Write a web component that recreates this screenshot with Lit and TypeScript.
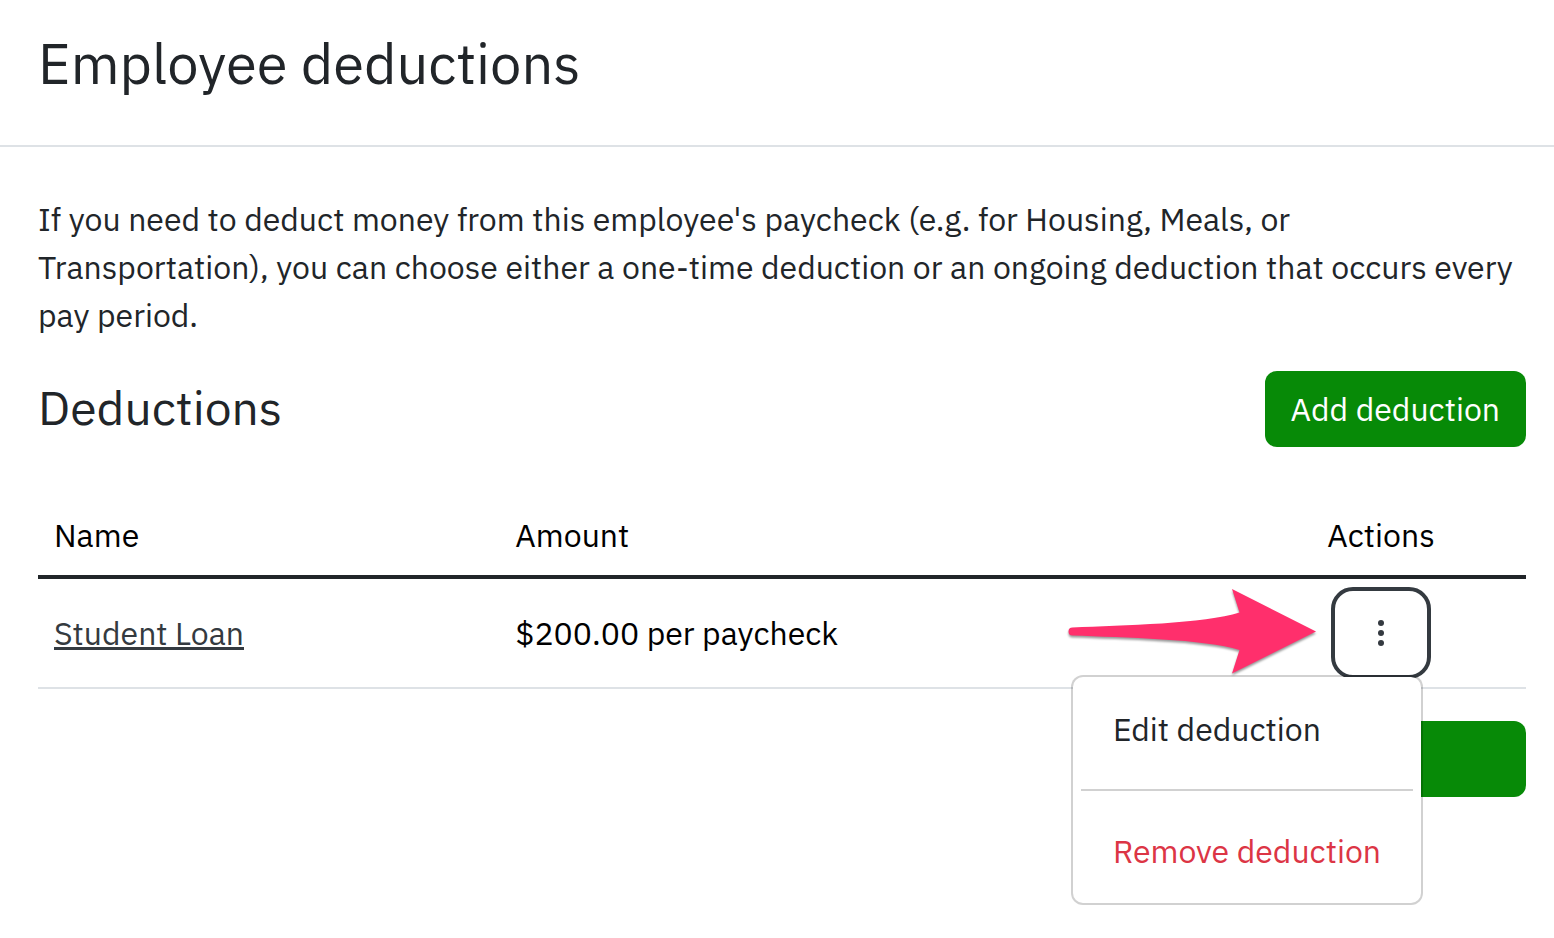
import { LitElement, html, css } from "lit";
import { customElement, state } from "lit/decorators.js";

interface Deduction {
  name: string;
  amount: string;
}

@customElement("deduction-actions")
export class DeductionActions extends LitElement {
  static styles = css`
    :host {
      display: inline-block;
      position: relative;
      vertical-align: top;
      text-align: left;
    }
    button {
      font: inherit;
      cursor: pointer;
    }
    .toggle {
      display: flex;
      align-items: center;
      justify-content: center;
      width: 100px;
      height: 92px;
      padding: 0;
      border: 4px solid #343a40;
      border-radius: 22px;
      background: #fff;
      color: #343a40;
    }
    .toggle:focus {
      outline: none;
    }
    .pointer {
      position: absolute;
      top: 0;
      right: 114px;
      pointer-events: none;
      filter: drop-shadow(0 2px 1px rgba(0, 0, 0, 0.4));
    }
    .menu {
      position: absolute;
      top: 88px;
      right: 8px;
      box-sizing: border-box;
      margin: 0;
      padding: 14px 8px;
      border: 2px solid rgba(0, 0, 0, 0.18);
      border-radius: 12px;
      background: #fff;
      background-clip: padding-box;
      list-style: none;
    }
    .item {
      display: block;
      width: 100%;
      padding: 12px 32px;
      border: 0;
      background: none;
      color: #212529;
      line-height: 52px;
      text-align: left;
      white-space: nowrap;
    }
    .danger {
      color: #dc3545;
    }
    .divider {
      height: 2px;
      margin: 22px 0;
      background: rgba(0, 0, 0, 0.18);
    }
  `;

  @state() private open = true;

  render() {
    return html`
      <button
        class="toggle"
        type="button"
        aria-label="Actions"
        aria-haspopup="menu"
        aria-expanded=${this.open}
        @click=${() => (this.open = !this.open)}
      >
        <svg width="8" height="28" viewBox="0 0 8 28" fill="currentColor" aria-hidden="true">
          <circle cx="4" cy="4" r="3" />
          <circle cx="4" cy="14" r="3" />
          <circle cx="4" cy="24" r="3" />
        </svg>
      </button>
      <svg class="pointer" width="254" height="92" viewBox="0 0 254 92" fill="#ff2f6c" aria-hidden="true">
        <path
          d="M9.500 40.500C60 38.500 142 36.500 176.500 25.500L169 2L253 44.500L169 86.500L176.500 63C142 52 60 50.500 9.500 48.500A4 4 0 0 1 9.500 40.500Z"
        />
      </svg>
      ${this.open
        ? html`<ul class="menu" role="menu">
            <li role="none"><button class="item" type="button" role="menuitem">Edit deduction</button></li>
            <li class="divider" role="separator"></li>
            <li role="none"><button class="item danger" type="button" role="menuitem">Remove deduction</button></li>
          </ul>`
        : null}
    `;
  }
}

@customElement("app-root")
export class AppRoot extends LitElement {
  static styles = css`
    :host {
      display: block;
      min-height: 100vh;
      background: #fff;
      color: #212529;
      font-family: "IBM Plex Sans", Roboto, sans-serif;
      font-size: 32px;
      line-height: 48px;
    }
    .header {
      padding: 29px 38px 48px;
      border-bottom: 2px solid #dee2e6;
    }
    h1,
    h2,
    p {
      margin: 0;
      font-weight: 400;
    }
    h1 {
      font-size: 56px;
      line-height: 68px;
    }
    h2 {
      padding-bottom: 4px;
      font-size: 48px;
      line-height: 58px;
    }
    .content {
      padding: 48px 28px 32px 38px;
    }
    .bar {
      display: flex;
      align-items: center;
      justify-content: space-between;
      margin: 32px 0 49px;
    }
    .primary {
      height: 76px;
      padding: 0 26px;
      border: 0;
      border-radius: 12px;
      background: #078a07;
      color: #fff;
      font: inherit;
      cursor: pointer;
    }
    .wide {
      width: 261px;
    }
    table {
      width: 100%;
      border-collapse: separate;
      border-spacing: 0;
      table-layout: fixed;
      color: #000;
    }
    th,
    td {
      box-sizing: border-box;
      font-weight: 400;
      text-align: left;
    }
    th {
      padding: 15px 16px 16px;
      border-bottom: 4px solid #212529;
    }
    td {
      padding: 8px 16px;
      border-bottom: 2px solid #dee2e6;
    }
    .name {
      width: 31%;
    }
    .actions {
      width: 290px;
      text-align: center;
    }
    a {
      color: #343a40;
      text-decoration: underline;
    }
    .footer {
      display: flex;
      justify-content: flex-end;
      margin-top: 32px;
    }
  `;

  private deductions: Deduction[] = [{ name: "Student Loan", amount: "$200.00 per paycheck" }];

  render() {
    return html`
      <header class="header"><h1>Employee deductions</h1></header>
      <main class="content">
        <p>
          If you need to deduct money from this employee's paycheck (e.g. for Housing, Meals, or
          Transportation), you can choose either a one-time deduction or an ongoing deduction that
          occurs every pay period.
        </p>
        <div class="bar">
          <h2>Deductions</h2>
          <button class="primary" type="button">Add deduction</button>
        </div>
        <table>
          <thead>
            <tr>
              <th class="name" scope="col">Name</th>
              <th scope="col">Amount</th>
              <th class="actions" scope="col">Actions</th>
            </tr>
          </thead>
          <tbody>
            ${this.deductions.map(
              (d) => html`<tr>
                <td><a href="#">${d.name}</a></td>
                <td>${d.amount}</td>
                <td class="actions"><deduction-actions></deduction-actions></td>
              </tr>`
            )}
          </tbody>
        </table>
        <div class="footer">
          <button class="primary wide" type="button" aria-label="Continue"></button>
        </div>
      </main>
    `;
  }
}
